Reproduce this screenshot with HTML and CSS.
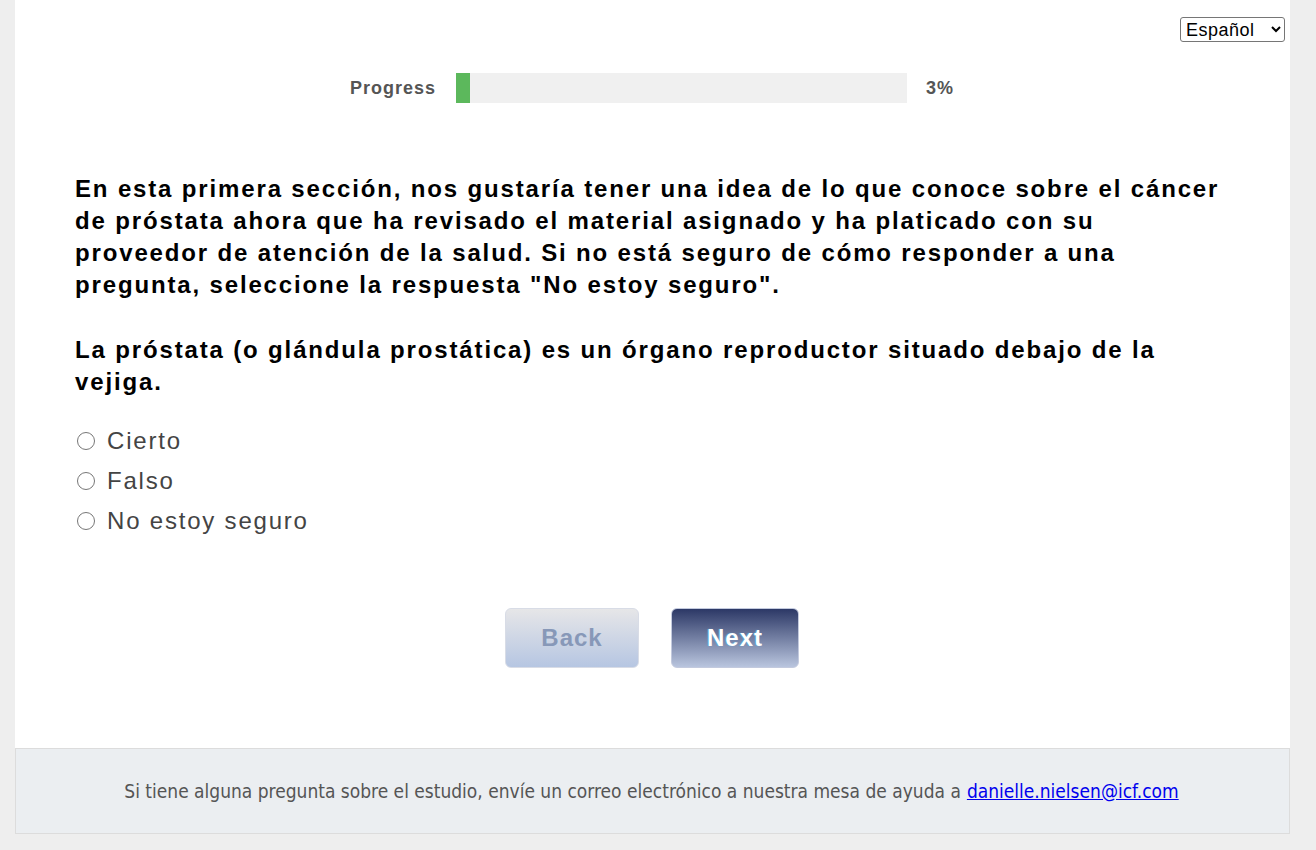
FILE: index.html
```html
<!DOCTYPE html>
<html lang="es">
<head>
    <meta charset="UTF-8">
    <meta name="viewport" content="width=device-width, initial-scale=1.0">
    <title>Encuesta</title>
    <link rel="stylesheet" href="styles.css">
</head>
<body>
    <div class="page">
        <div class="container">
            <div class="lang-row">
                <select class="lang">
                    <option>Español</option>
                    <option>English</option>
                </select>
            </div>
            <div class="progress">
                <span class="progress-label">Progress</span>
                <div class="progress-bar"><div class="progress-fill" style="width: 3%"></div></div>
                <span class="progress-value">3%</span>
            </div>
            <div class="question">
                <p class="intro">En esta primera sección, nos gustaría tener una idea de lo que conoce sobre el cáncer de próstata ahora que ha revisado el material asignado y ha platicado con su proveedor de atención de la salud. Si no está seguro de cómo responder a una pregunta, seleccione la respuesta "No estoy seguro".</p>
                <p class="prompt">La próstata (o glándula prostática) es un órgano reproductor situado debajo de la vejiga.</p>
                <div class="options">
                    <label class="option"><input type="radio" name="q1"> Cierto</label>
                    <label class="option"><input type="radio" name="q1"> Falso</label>
                    <label class="option"><input type="radio" name="q1"> No estoy seguro</label>
                </div>
            </div>
            <div class="nav">
                <button class="btn btn-back">Back</button>
                <button class="btn btn-next">Next</button>
            </div>
        </div>
        <div class="footer">
            Si tiene alguna pregunta sobre el estudio, envíe un correo electrónico a nuestra mesa de ayuda a <a href="mailto:danielle.nielsen@icf.com">danielle.nielsen@icf.com</a>
        </div>
    </div>
</body>
</html>
```

FILE: styles.css
```css
body {
    margin: 0;
    background-color: #eeeeee;
    font-family: "Liberation Sans", Arial, sans-serif;
}
.page {
    margin: 0 26px 0 15px;
    padding-bottom: 16px;
}
.container {
    background-color: white;
    padding: 17px 61px 80px 60px;
}
.lang-row {
    display: flex;
    justify-content: flex-end;
    height: 30px;
    margin-right: -56px;
}
.lang {
    font-family: "Liberation Sans", Arial, sans-serif;
    font-size: 18px;
    letter-spacing: 0.5px;
    width: 105px;
    height: 25px;
    padding: 0 1px;
    border: 1px solid #767676;
    border-radius: 3px;
    background: white;
    color: black;
}
.progress {
    display: flex;
    align-items: center;
    justify-content: center;
    margin-top: 26px;
    color: #555;
    font-weight: bold;
    font-size: 18px;
    letter-spacing: 1px;
}
.progress-label {
    margin-right: 20px;
}
.progress-bar {
    width: 451px;
    height: 30px;
    background-color: #f0f0f0;
}
.progress-fill {
    height: 100%;
    background-color: #5cb85c;
}
.progress-value {
    margin-left: 19px;
}
.intro, .prompt {
    font-size: 24px;
    font-weight: bold;
    line-height: 32px;
    letter-spacing: 1.85px;
    color: black;
    margin: 0;
}
.intro {
    margin-top: 70px;
}
.prompt {
    margin-top: 33px;
}
.options {
    margin-top: 23px;
}
.option {
    display: flex;
    align-items: center;
    height: 40px;
    font-size: 24px;
    letter-spacing: 1.8px;
    color: #444;
}
.option input {
    width: 18px;
    height: 18px;
    margin: 0 12px 0 2px;
}
.nav {
    display: flex;
    justify-content: center;
    gap: 32px;
    margin-top: 67px;
}
.btn {
    height: 60px;
    border-radius: 6px;
    font-family: "Liberation Sans", Arial, sans-serif;
    font-size: 24px;
    font-weight: bold;
    letter-spacing: 1px;
    border: 1px solid #d8dce6;
    cursor: pointer;
}
.btn-back {
    width: 134px;
    color: #8798b8;
    background: linear-gradient(#e6e6e8, #b6c6e2);
}
.btn-next {
    width: 128px;
    color: white;
    border-color: #c3cade;
    background: linear-gradient(#2c3866, #b9c5de);
    text-shadow: -1px 0 1px #5aa8e0;
}
.footer {
    background-color: #ebeef1;
    border: 1px solid #dcdcdc;
    height: 84px;
    display: flex;
    align-items: center;
    justify-content: center;
    font-family: "DejaVu Sans Condensed", "DejaVu Sans", sans-serif;
    font-size: 19px;
    color: #555;
    padding-right: 2px;
}
.footer a {
    color: #0000ee;
    margin-left: 6px;
}
```
